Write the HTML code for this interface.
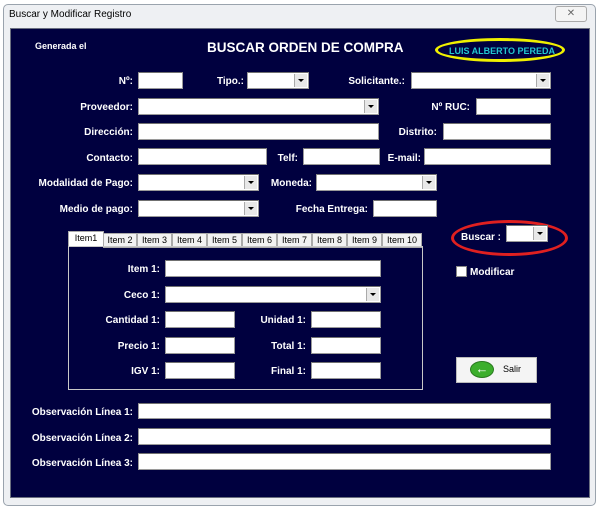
<!DOCTYPE html><html><head><meta charset="utf-8"><style>
body{margin:0;width:600px;height:508px;background:#fff;position:relative;overflow:hidden;font-family:"Liberation Sans",sans-serif}
.a{position:absolute}
.win{left:3px;top:4px;width:591px;height:500px;background:#eef0f3;border:1px solid #9aa3ad;border-radius:5px}
.nav{left:10px;top:28px;width:578px;height:468px;background:#00003f;border:1px solid #6a6f80}
.l{position:absolute;color:#fff;font-weight:bold;font-size:10px;text-align:right;white-space:nowrap}
.i{position:absolute;background:#fff;border:1px solid #9a9a9a;border-top-color:#707070;box-sizing:border-box}
.c::after{content:"";position:absolute;right:1px;top:1px;bottom:1px;width:12px;background:#e8e8e8;border-left:1px solid #aaa}
.c::before{content:"";position:absolute;right:4px;top:6px;border-left:3px solid transparent;border-right:3px solid transparent;border-top:3px solid #000;z-index:2}
.tab{position:absolute;top:233px;height:13px;background:#f2f2f2;border:1px solid #aaa;font-size:9px;line-height:13px;text-align:center;color:#000}
</style></head><body>
<div class="a win"></div>
<div class="a" style="left:9px;top:9px;font-size:10px;color:#000">Buscar y Modificar Registro</div>
<div class="a" style="left:555px;top:6px;width:30px;height:14px;border:1px solid #aaa;border-radius:3px;background:#f4f4f4;font-size:10px;text-align:center;line-height:14px;color:#666">✕</div>
<div class="a nav"></div>
<div class="l" style="left:35px;top:41px;font-size:9px">Generada el</div>
<div class="l" style="left:207px;top:40px;font-size:13.5px">BUSCAR ORDEN DE COMPRA</div>
<div class="a" style="left:435px;top:38px;width:130px;height:24px;border:3px solid #f0f000;border-radius:50%;box-sizing:border-box"></div>
<div class="a" style="left:449px;top:46px;font-size:9px;font-weight:bold;color:#22c8d0">LUIS ALBERTO PEREDA</div>

<div class="l" style="right:467px;top:76px">Nº:</div><div class="i" style="left:138px;top:72px;width:45px;height:17px"></div>
<div class="l" style="right:356px;top:76px">Tipo.:</div><div class="i c" style="left:247px;top:72px;width:62px;height:17px"></div>
<div class="l" style="right:195px;top:76px">Solicitante.:</div><div class="i c" style="left:411px;top:72px;width:140px;height:17px"></div>

<div class="l" style="right:467px;top:102px">Proveedor:</div><div class="i c" style="left:138px;top:98px;width:241px;height:17px"></div>
<div class="l" style="right:130px;top:102px">Nº RUC:</div><div class="i" style="left:476px;top:98px;width:75px;height:17px"></div>

<div class="l" style="right:467px;top:127px">Dirección:</div><div class="i" style="left:138px;top:123px;width:241px;height:17px"></div>
<div class="l" style="right:163px;top:127px">Distrito:</div><div class="i" style="left:443px;top:123px;width:108px;height:17px"></div>

<div class="l" style="right:467px;top:153px">Contacto:</div><div class="i" style="left:138px;top:148px;width:129px;height:17px"></div>
<div class="l" style="right:302px;top:153px">Telf:</div><div class="i" style="left:303px;top:148px;width:77px;height:17px"></div>
<div class="l" style="right:179px;top:153px">E-mail:</div><div class="i" style="left:424px;top:148px;width:127px;height:17px"></div>

<div class="l" style="right:467px;top:178px">Modalidad de Pago:</div><div class="i c" style="left:138px;top:174px;width:121px;height:17px"></div>
<div class="l" style="right:288px;top:178px">Moneda:</div><div class="i c" style="left:316px;top:174px;width:121px;height:17px"></div>

<div class="l" style="right:467px;top:204px">Medio de pago:</div><div class="i c" style="left:138px;top:200px;width:121px;height:17px"></div>
<div class="l" style="right:232px;top:204px">Fecha Entrega:</div><div class="i" style="left:373px;top:200px;width:64px;height:17px"></div>

<div class="tab" style="left:68px;width:34px;top:231px;height:15px;background:#fff;border-bottom:none">Item1</div>
<div class="tab" style="left:103px;width:32px">Item 2</div>
<div class="tab" style="left:137px;width:33px">Item 3</div>
<div class="tab" style="left:172px;width:33px">Item 4</div>
<div class="tab" style="left:207px;width:33px">Item 5</div>
<div class="tab" style="left:242px;width:33px">Item 6</div>
<div class="tab" style="left:277px;width:33px">Item 7</div>
<div class="tab" style="left:312px;width:33px">Item 8</div>
<div class="tab" style="left:347px;width:33px">Item 9</div>
<div class="tab" style="left:382px;width:38px">Item 10</div>
<div class="a" style="left:68px;top:246px;width:353px;height:142px;border:1px solid #c8c8c8"></div>

<div class="l" style="right:440px;top:264px">Item 1:</div><div class="i" style="left:165px;top:260px;width:216px;height:17px"></div>
<div class="l" style="right:440px;top:290px">Ceco 1:</div><div class="i c" style="left:165px;top:286px;width:216px;height:17px"></div>
<div class="l" style="right:440px;top:315px">Cantidad 1:</div><div class="i" style="left:165px;top:311px;width:70px;height:17px"></div>
<div class="l" style="right:294px;top:315px">Unidad 1:</div><div class="i" style="left:311px;top:311px;width:70px;height:17px"></div>
<div class="l" style="right:440px;top:341px">Precio 1:</div><div class="i" style="left:165px;top:337px;width:70px;height:17px"></div>
<div class="l" style="right:294px;top:341px">Total 1:</div><div class="i" style="left:311px;top:337px;width:70px;height:17px"></div>
<div class="l" style="right:440px;top:366px">IGV 1:</div><div class="i" style="left:165px;top:362px;width:70px;height:17px"></div>
<div class="l" style="right:294px;top:366px">Final 1:</div><div class="i" style="left:311px;top:362px;width:70px;height:17px"></div>

<div class="a" style="left:451px;top:220px;width:117px;height:36px;border:3px solid #e02020;border-radius:50%;box-sizing:border-box"></div>
<div class="l" style="right:99px;top:232px">Buscar :</div><div class="i c" style="left:506px;top:225px;width:42px;height:17px"></div>
<div class="a" style="left:456px;top:266px;width:11px;height:11px;background:#fff;border:1px solid #888;box-sizing:border-box"></div>
<div class="l" style="left:470px;top:267px">Modificar</div>
<div class="a" style="left:456px;top:357px;width:81px;height:26px;background:#f4f4f4;border:1px solid #bbb;box-sizing:border-box"></div>
<div class="a" style="left:470px;top:361px;width:24px;height:17px;border-radius:50%;background:#3cae2c;border:1px solid #2a7a20;box-sizing:border-box;color:#fff;font-size:13px;line-height:14px;text-align:center;font-weight:bold">←</div>
<div class="a" style="left:503px;top:364px;font-size:9px;color:#000">Salir</div>

<div class="l" style="right:467px;top:407px">Observación Línea 1:</div><div class="i" style="left:138px;top:403px;width:413px;height:16px"></div>
<div class="l" style="right:467px;top:433px">Observación Línea 2:</div><div class="i" style="left:138px;top:428px;width:413px;height:17px"></div>
<div class="l" style="right:467px;top:458px">Observación Línea 3:</div><div class="i" style="left:138px;top:453px;width:413px;height:17px"></div>
</body></html>
